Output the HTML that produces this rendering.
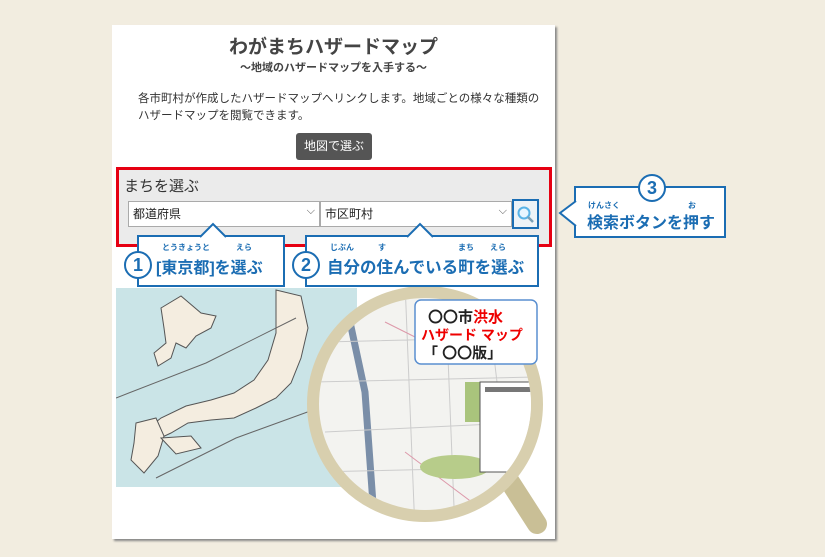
<!DOCTYPE html>
<html><head><meta charset="utf-8"><style>
body{margin:0;width:825px;height:557px;background:#f2ede0;position:relative;overflow:hidden;font-family:"Liberation Sans","Noto Sans CJK JP",sans-serif;}
.a{position:absolute}
.card{left:112px;top:25px;width:443px;height:514px;background:#fff;box-shadow:2px 2px 2px #888;}
.t{left:112px;width:443px;text-align:center;color:#444;font-weight:bold}
.sel{top:201px;height:26px;background:#fff;border:1px solid #aaa;box-sizing:border-box;font-size:12px;line-height:24px;padding-left:4px;color:#222}
.sel:after{content:"⌵";position:absolute;right:4px;top:-3px;font-size:11px;color:#555}
.co{border:2px solid #1b6db3;background:#fff;box-sizing:border-box;color:#1b6db3;font-weight:bold}
.num{border:2px solid #1b6db3;border-radius:50%;background:#fff;color:#1b6db3;font-weight:bold;text-align:center;box-sizing:border-box}
.rb{font-size:8px;font-weight:bold;color:#1b6db3}
</style></head><body>
<div class="a card"></div>
<div class="a t" style="top:32px;font-size:19px">わがまちハザードマップ</div>
<div class="a t" style="top:59px;font-size:11px">〜地域のハザードマップを入手する〜</div>
<div class="a" style="left:138px;top:91px;font-size:11.5px;line-height:17px;color:#333;white-space:nowrap">各市町村が作成したハザードマップへリンクします。地域ごとの様々な種類の<br>ハザードマップを閲覧できます。</div>
<div class="a" style="left:296px;top:133px;width:76px;height:27px;background:#555;border-radius:3px;color:#fff;font-size:12px;text-align:center;line-height:27px">地図で選ぶ</div>
<div class="a" style="left:116px;top:167px;width:436px;height:80px;background:#ebebeb;border:3px solid #e60012;box-sizing:border-box"></div>
<div class="a" style="left:124px;top:175px;font-size:15px;color:#333">まちを選ぶ</div>
<div class="a sel" style="left:128px;width:192px">都道府県</div>
<div class="a sel" style="left:320px;width:192px">市区町村</div>
<div class="a" style="left:512px;top:199px;width:27px;height:30px;border:2px solid #1b6db3;box-sizing:border-box;background:#eef3f7">
<svg width="23" height="26" viewBox="0 0 23 26"><circle cx="10" cy="12" r="5.5" fill="#e8f6ff" stroke="#59b3e6" stroke-width="2"/><line x1="14" y1="16" x2="19" y2="21" stroke="#7a9fb5" stroke-width="2.5"/></svg></div>
<!-- map -->
<div class="a" style="left:116px;top:288px;width:241px;height:199px;background:#cae4e7"></div>
<svg class="a" style="left:116px;top:288px" width="241" height="199"><g fill="#f4ede0" stroke="#555" stroke-width="1">
<path d="M45 20 L65 8 L85 25 L100 28 L95 40 L80 48 L70 60 L60 55 L55 70 L42 78 L38 65 L50 55 L48 40 Z"/>
<path d="M160 2 L185 8 L192 40 L185 70 L175 95 L160 110 L140 120 L118 130 L95 132 L72 135 L55 145 L40 152 L30 142 L45 130 L70 118 L95 112 L118 105 L138 92 L152 72 L160 45 Z"/>
<path d="M20 135 L40 130 L48 148 L42 168 L28 185 L15 172 L18 155 Z"/>
<path d="M45 150 L75 148 L85 160 L60 166 Z"/></g>
<g stroke="#666" fill="none"><path d="M0 110 L90 75 L180 30"/><path d="M40 190 L120 150 L230 110"/></g></svg>
<!-- magnifier -->
<svg class="a" style="left:285px;top:282px" width="270" height="260">
<line x1="225" y1="200" x2="252" y2="242" stroke="#c9bf96" stroke-width="20" stroke-linecap="round"/>
<circle cx="140" cy="122" r="112" fill="#f3f3f0" stroke="#d8cfae" stroke-width="12"/>
<clipPath id="c"><circle cx="140" cy="122" r="106"/></clipPath>
<g clip-path="url(#c)"><path d="M65 40 L80 110 L90 250" stroke="#7a8ea8" stroke-width="7" fill="none"/>
<path d="M40 60 L250 55 M30 100 L250 95 M40 150 L250 140 M30 190 L250 185 M120 0 L130 250 M160 0 L170 250 M200 0 L230 250" stroke="#ccc" fill="none"/>
<path d="M100 40 L180 80 M120 170 L200 230" stroke="#d9a" fill="none"/>
<ellipse cx="170" cy="185" rx="35" ry="12" fill="#b7cc8a"/><rect x="180" y="100" width="20" height="40" fill="#a9c47c"/>
<rect x="195" y="100" width="60" height="90" fill="#fff" stroke="#555"/><rect x="200" y="105" width="50" height="5" fill="#777"/></g>
<rect x="130" y="18" width="122" height="64" rx="6" fill="#fff" stroke="#5a8fd0" stroke-width="1.5"/>
<text x="143" y="40" font-size="15" font-weight="bold" fill="#222" font-family="Liberation Sans,Noto Sans CJK JP,sans-serif">〇〇市<tspan fill="#e00">洪水</tspan></text>
<text x="136" y="58" font-size="14" font-weight="bold" fill="#e00" font-family="Liberation Sans,Noto Sans CJK JP,sans-serif">ハザード マップ</text>
<text x="138" y="76" font-size="15" font-weight="bold" fill="#222" font-family="Liberation Sans,Noto Sans CJK JP,sans-serif">「 〇〇版」</text>
</svg>
<!-- callout 1 -->
<div class="a co" style="left:137px;top:235px;width:148px;height:52px"></div>
<svg class="a" style="left:200px;top:222px" width="28" height="16"><path d="M0 15 L13 2 L26 15" fill="#fff" stroke="#1b6db3" stroke-width="2"/></svg>
<div class="a rb" style="left:162px;top:242px">とうきょうと</div><div class="a rb" style="left:236px;top:242px">えら</div>
<div class="a num" style="left:124px;top:251px;width:28px;height:28px;font-size:18px;line-height:24px">1</div>
<div class="a" style="left:156px;top:254px;font-size:16px;font-weight:bold;color:#1b6db3">[東京都]を選ぶ</div>
<!-- callout 2 -->
<div class="a co" style="left:305px;top:235px;width:234px;height:52px"></div>
<svg class="a" style="left:407px;top:222px" width="28" height="16"><path d="M0 15 L13 2 L26 15" fill="#fff" stroke="#1b6db3" stroke-width="2"/></svg>
<div class="a rb" style="left:330px;top:242px">じぶん</div><div class="a rb" style="left:378px;top:242px">す</div><div class="a rb" style="left:458px;top:242px">まち</div><div class="a rb" style="left:490px;top:242px">えら</div>
<div class="a num" style="left:292px;top:251px;width:28px;height:28px;font-size:18px;line-height:24px">2</div>
<div class="a" style="left:327px;top:254px;font-size:16.5px;font-weight:bold;color:#1b6db3">自分の住んでいる町を選ぶ</div>
<!-- callout 3 -->
<div class="a co" style="left:574px;top:186px;width:152px;height:52px"></div>
<svg class="a" style="left:557px;top:200px" width="20" height="28"><path d="M19 1 L3 13 L19 26" fill="#fff" stroke="#1b6db3" stroke-width="2"/></svg>
<div class="a num" style="left:638px;top:174px;width:28px;height:28px;font-size:18px;line-height:24px">3</div>
<div class="a rb" style="left:588px;top:200px">けんさく</div><div class="a rb" style="left:688px;top:200px">お</div>
<div class="a" style="left:587px;top:209px;font-size:16px;font-weight:bold;color:#1b6db3">検索ボタンを押す</div>
</body></html>
